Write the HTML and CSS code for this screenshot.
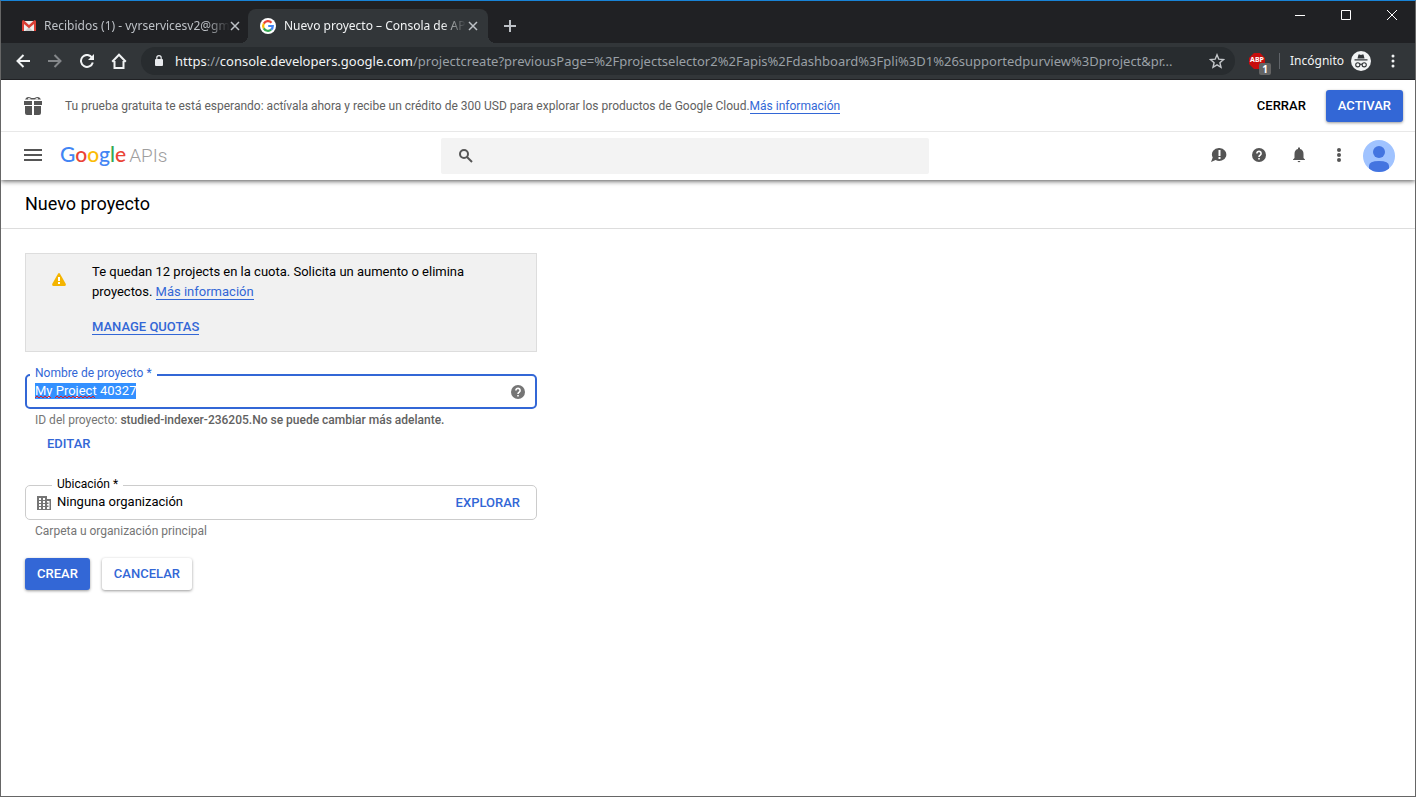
FILE: index.html
```html
<!DOCTYPE html>
<html lang="es">
	<head>
		<meta charset="utf-8">
		<title>Nuevo proyecto – Consola de APIs</title>
		<link rel="stylesheet" href="styles.css">
	</head>
	<body>
		<div class="window">
			<div class="tabstrip">
				<div class="tab">
					<svg width="14" height="12" viewBox="0 0 14 12"><path fill="#eee" d="M1 1h12v10H1z"/><path fill="#ccc" d="M3 11l4-4 4 4z"/><path fill="#d93f35" d="M0 1.500Q0 0 1.500 0L7 5l5.500-5Q14 0 14 1.500V11h-2V4L7 8.200 2 4v7H0z"/></svg>
					<span class="tab-title">Recibidos (1) - vyrservicesv2@gm</span>
					<button class="tab-close" aria-label="Cerrar"><svg width="10" height="10" viewBox="0 0 10 10"><path d="M1 1l8 8M9 1l-8 8"/></svg></button>
				</div>
				<div class="tab active">
					<svg width="16" height="16" viewBox="0 0 16 16"><circle cx="8" cy="8" r="8" fill="#fff"/><g fill="none" stroke-width="2.200"><path stroke="#ea4335" d="M3.800 5.600A4.800 4.800 0 0 1 11.500 4.700"/><path stroke="#fbbc05" d="M3.800 5.600A4.800 4.800 0 0 0 3.800 10.400"/><path stroke="#34a853" d="M3.800 10.400A4.800 4.800 0 0 0 11.100 11.700"/><path stroke="#4285f4" d="M11.100 11.700A4.800 4.800 0 0 0 12.800 8H8.200"/></g></svg>
					<span class="tab-title">Nuevo proyecto – Consola de AP</span>
					<button class="tab-close" aria-label="Cerrar"><svg width="10" height="10" viewBox="0 0 10 10"><path d="M1 1l8 8M9 1l-8 8"/></svg></button>
				</div>
				<button class="new-tab" aria-label="Nueva pestaña"><svg width="12" height="12" viewBox="0 0 12 12"><path d="M6 0v12M0 6h12"/></svg></button>
				<div class="window-controls">
					<button aria-label="Minimizar"><svg width="10" height="10" viewBox="0 0 10 10"><path d="M0 5.500h10"/></svg></button>
					<button aria-label="Maximizar"><svg width="10" height="10" viewBox="0 0 10 10"><path d="M.5.5h9v9h-9z"/></svg></button>
					<button aria-label="Cerrar ventana"><svg width="10" height="10" viewBox="0 0 10 10"><path d="M0 0l10 10M10 0L0 10"/></svg></button>
				</div>
			</div>

			<div class="toolbar">
				<button class="nav" aria-label="Atrás"><svg width="14" height="14" viewBox="0 0 14 14"><path d="M14 7H1.500M7.500 1l-6 6 6 6"/></svg></button>
				<button class="nav disabled" aria-label="Adelante"><svg width="14" height="14" viewBox="0 0 14 14"><path d="M0 7h12.500M6.500 1l6 6-6 6"/></svg></button>
				<button class="nav" aria-label="Recargar"><svg width="14" height="14" viewBox="0 0 14 14"><path d="M12 3.600A6 6 0 1 0 12.800 8.500"/><path class="solid" d="M14 0v6H8z"/></svg></button>
				<button class="nav" aria-label="Inicio"><svg width="16" height="16" viewBox="0 0 16 16"><path d="M1.200 8.800L8 1.800l6.800 7M3.500 8v7h9V8"/></svg></button>
				<div class="omnibox">
					<svg width="8" height="12" viewBox="0 0 8 12"><path fill="#e8eaed" d="M0 5q0-1 1-1h6q1 0 1 1v5q0 1-1 1H1q-1 0-1-1z"/><path fill="none" stroke="#e8eaed" stroke-width="1.200" d="M1.800 5V2.800a2.200 2.200 0 0 1 4.400 0V5"/></svg>
					<span class="url">https<i>://</i>console.developers.google.com<i>/projectcreate?previousPage=%2Fprojectselector2%2Fapis%2Fdashboard%3Fpli%3D1%26supportedpurview%3Dproject&amp;pr...</i></span>
					<svg width="16" height="16" viewBox="0 0 16 16"><path fill="none" stroke="#c4c7ca" stroke-width="1.400" d="M8 1.800l1.800 4.400 4.700.4L10.900 9.700l1.100 4.600L8 11.800l-4 2.500 1.100-4.600L1.500 6.600l4.700-.4z"/></svg>
				</div>
				<div class="extension">
					<svg width="16" height="16" viewBox="0 0 16 16"><path fill="#c70d0d" d="M5 0h6l5 5v6l-5 5H5l-5-5V5z"/></svg>
					<b class="ext-name">ABP</b>
					<b class="ext-count">1</b>
				</div>
				<span class="divider"></span>
				<span class="incognito">Incógnito</span>
				<svg width="20" height="20" viewBox="0 0 20 20"><circle cx="10" cy="10" r="10" fill="#f1f3f4"/><path fill="#323639" d="M6.500 7.500l1-4h1.200l1.300.5 1.300-.5h1.200l1 4zM3.500 8.200h13v1.200h-13z"/><g fill="none" stroke="#323639" stroke-width="1.100"><circle cx="6.800" cy="13.800" r="2.100"/><circle cx="13.200" cy="13.800" r="2.100"/><path d="M8.900 13.500q1.100-.7 2.200 0"/></g></svg>
				<button class="menu" aria-label="Menú"><svg width="4" height="14" viewBox="0 0 4 14"><circle cx="2" cy="2" r="1.500"/><circle cx="2" cy="7" r="1.500"/><circle cx="2" cy="12" r="1.500"/></svg></button>
			</div>

			<div class="trial">
				<svg width="18" height="18" viewBox="0 0 18 18"><path fill="#555" d="M0 4h8v4H0zM10 4h8v4h-8zM1 9h7v9H3q-2 0-2-2zM10 9h7v7q0 2-2 2h-5zM1 2.500Q2 0 4 0q2 0 3.500 1H10.500Q12 0 14 0q2 0 3 2.500H1z"/><path fill="#fff" d="M4 1.200h2l1 1.300H4zM14 1.200h-2l-1 1.300h3z"/></svg>
				<p>Tu prueba gratuita te está esperando: actívala ahora y recibe un crédito de 300 USD para explorar los productos de Google Cloud.<a href="#">Más información</a></p>
				<button class="button plain">Cerrar</button>
				<button class="button primary">Activar</button>
			</div>

			<header class="header">
				<div class="brand">
					<button class="icon-button" aria-label="Menú de navegación"><svg width="18" height="12" viewBox="0 0 18 12"><path fill="#555" d="M0 0h18v2H0zM0 5h18v2H0zM0 10h18v2H0z"/></svg></button>
					<a class="logo" href="#"><span class="google"><span class="g-blue">G</span><span class="g-red">o</span><span class="g-yellow">o</span><span class="g-blue">g</span><span class="g-green">l</span><span class="g-red">e</span></span><span class="apis">APIs</span></a>
				</div>
				<div class="search">
					<svg width="14" height="14" viewBox="0 0 14 14"><g fill="none" stroke="#555" stroke-width="2"><circle cx="5" cy="5" r="4"/><path d="M8 8l5 5"/></g></svg>
					<input type="search" aria-label="Buscar">
				</div>
				<div class="actions">
					<button class="icon-button" aria-label="Comentarios"><svg width="16" height="16" viewBox="0 0 16 16"><path fill="#555" d="M8.500 1A7 6.500 0 1 1 4.600 13L0 15l1.700-4.600A7 6.500 0 0 1 8.500 1z"/><path fill="#fff" d="M7.500 3h2v6h-2zM7.500 10h2v2h-2z"/></svg></button>
					<button class="icon-button" aria-label="Ayuda"><svg class="help" width="14" height="14" viewBox="0 0 14 14"><circle cx="7" cy="7" r="7"/><path d="M4.900 5.500a2.100 2.100 0 1 1 3.500 1.500Q7 7.800 7 9"/><path d="M7 10v1.600"/></svg></button>
					<button class="icon-button" aria-label="Notificaciones"><svg width="12" height="16" viewBox="0 0 12 16"><path fill="#555" d="M5 2V1q1-1.500 2 0v1q3.500.8 3.500 5v4L12 12.500v.5H0v-.5L1.500 11V7Q1.500 2.800 5 2zM4.500 14h3Q6 16.500 4.500 14z"/></svg></button>
					<button class="icon-button" aria-label="Más opciones"><svg width="4" height="14" viewBox="0 0 4 14" fill="#555"><circle cx="2" cy="2" r="2"/><circle cx="2" cy="7" r="2"/><circle cx="2" cy="12" r="2"/></svg></button>
					<button class="account" aria-label="Cuenta"><svg width="32" height="32" viewBox="0 0 32 32"><circle cx="16" cy="16" r="16" fill="#a0c3ff"/><circle cx="16" cy="12" r="6" fill="#4374e0"/><path fill="#4374e0" d="M6 28.500V26q0-5 10-5t10 5v2.500Q22 32 16 32T6 28.500z"/></svg></button>
				</div>
			</header>

			<h1>Nuevo proyecto</h1>

			<main>
				<form onsubmit="return false;">
					<div class="notice">
						<svg width="14" height="13" viewBox="0 0 14 13"><path fill="#f4b400" d="M6 .7Q7-.6 8 .7l5.700 10Q14.300 13 12.500 13h-11Q-.3 13 .3 10.700z"/><path fill="#fff" d="M6 4h2v4H6zM6 9h2v2H6z"/></svg>
						<div>
							<p>Te quedan 12 projects en la cuota. Solicita un aumento o elimina proyectos. <a href="#">Más información</a></p>
							<p class="quotas"><a href="#">Manage quotas</a></p>
						</div>
					</div>

					<div class="field focused">
						<label for="projectName">Nombre de proyecto *</label>
						<input id="projectName" type="text" value="My Project 40327" spellcheck="false">
						<svg class="spelling" width="62" height="3" viewBox="0 0 62 3"><path d="M0 2l2-2 2 2 2-2 2 2 2-2 2 2 2-2 2 2M20 2l2-2 2 2 2-2 2 2 2-2 2 2 2-2 2 2 2-2 2 2 2-2 2 2 2-2 2 2 2-2 2 2 2-2 2 2 2-2 2 2"/></svg>
						<svg class="help" width="14" height="14" viewBox="0 0 14 14"><circle cx="7" cy="7" r="7"/><path d="M4.900 5.500a2.100 2.100 0 1 1 3.500 1.500Q7 7.800 7 9"/><path d="M7 10v1.600"/></svg>
					</div>
					<p class="hint">ID del proyecto: <b>studied-indexer-236205.No se puede cambiar más adelante.</b></p>
					<button class="button link edit" type="button">Editar</button>

					<div class="field location">
						<label for="location">Ubicación *</label>
						<svg width="14" height="14" viewBox="0 0 14 14"><path fill="#757575" fill-rule="evenodd" d="M0 0h10v3h4v11H0zM2 2v2h2V2zM6 2v2h2V2zM2 5v2h2V5zM6 5v2h2V5zM2 8v2h2V8zM6 8v2h2V8zM2 11v2h2v-2zM6 11v2h2v-2zM10 5v8h2.500V5z"/><path fill="#757575" d="M10 6.500h1.500V8H10zM10 9.500h1.500V11H10z"/></svg>
						<input id="location" type="text" value="Ninguna organización" readonly>
						<button class="button link" type="button">Explorar</button>
					</div>
					<p class="hint">Carpeta u organización principal</p>

					<div class="buttons">
						<button class="button primary" type="submit">Crear</button>
						<button class="button raised" type="button">Cancelar</button>
					</div>
				</form>
			</main>
		</div>
		<script>
			var projectName = document.getElementById("projectName");
			projectName.focus();
			projectName.select();
		</script>
	</body>
</html>
```
FILE: styles.css
```css
* {
	box-sizing: border-box;
}
body {
	margin: 0;
	font-family: Roboto, sans-serif;
	font-size: 13px;
	line-height: 20px;
	color: #000;
	background: #fff;
}
button {
	margin: 0;
	padding: 0;
	border: 0;
	background: none;
	font: inherit;
	display: flex;
	align-items: center;
	justify-content: center;
}
input {
	border: 0;
	padding: 0;
	outline: 0;
	background: none;
	font: inherit;
	color: inherit;
	min-width: 0;
	flex: 1;
}
p {
	margin: 0;
}
svg {
	flex: none;
	display: block;
}
a {
	color: #3367d6;
	text-decoration: none;
	border-bottom: 1px solid #3367d6;
}
.window {
	min-height: 100vh;
	border: 1px solid #666;
	border-top-color: #1883d7;
}

/* browser frame */
.tabstrip {
	display: flex;
	align-items: flex-end;
	height: 42px;
	padding-left: 7px;
	background: #202124;
}
.tab {
	position: relative;
	display: flex;
	align-items: center;
	width: 240px;
	height: 34px;
	padding: 0 8px 0 14px;
	font-family: "Noto Sans", sans-serif;
	font-size: 12px;
	color: #bdc1c6;
}
.tab.active {
	padding-left: 12px;
	background: #323639;
	border-radius: 8px 8px 0 0;
	color: #f1f3f4;
}
.tab.active::before,
.tab.active::after {
	content: "";
	position: absolute;
	bottom: 0;
	width: 8px;
	height: 8px;
}
.tab.active::before {
	right: 100%;
	background: radial-gradient(circle at 0 0, #202124 8px, #323639 8px);
}
.tab.active::after {
	left: 100%;
	background: radial-gradient(circle at 100% 0, #202124 8px, #323639 8px);
}
.tab-title {
	flex: 1;
	margin-left: 8px;
	white-space: nowrap;
	mask-image: linear-gradient(to left, transparent, #000 24px);
}
.tab-close {
	width: 16px;
	height: 16px;
}
.tab-close svg,
.new-tab svg {
	fill: none;
	stroke: #bdc1c6;
	stroke-width: 2;
}
.tab-close svg {
	stroke-width: 1.5;
}
.new-tab {
	width: 28px;
	height: 34px;
	margin-left: 8px;
}
.window-controls {
	display: flex;
	align-self: flex-start;
	margin-left: auto;
}
.window-controls button {
	width: 46px;
	height: 28px;
}
.window-controls svg {
	fill: none;
	stroke: #fff;
}
.toolbar {
	display: flex;
	align-items: center;
	height: 37px;
	padding: 0 6px;
	background: #323639;
	border-bottom: 1px solid #202124;
	font-family: "Noto Sans", sans-serif;
	font-size: 12px;
	color: #f1f3f4;
}
.nav {
	width: 32px;
	height: 28px;
}
.nav svg {
	fill: none;
	stroke: #f1f3f4;
	stroke-width: 2;
}
.nav .solid {
	fill: #f1f3f4;
	stroke: none;
}
.nav.disabled svg {
	stroke: #84878a;
}
.omnibox {
	display: flex;
	flex: 1;
	align-items: center;
	gap: 12px;
	min-width: 0;
	height: 28px;
	margin: 0 14px 0 6px;
	padding: 0 10px 0 14px;
	background: #282c2f;
	border-radius: 14px;
	font-size: 13px;
}
.url {
	flex: 1;
	overflow: hidden;
	white-space: nowrap;
	text-overflow: ellipsis;
	color: #f1f3f4;
}
.url i {
	font-style: normal;
	color: #9aa0a6;
}
.extension {
	position: relative;
	margin-right: 14px;
}
.ext-name {
	position: absolute;
	top: 0;
	left: 0;
	width: 16px;
	font-size: 7px;
	line-height: 14px;
	text-align: center;
	color: #fff;
}
.ext-count {
	position: absolute;
	top: 10px;
	left: 10px;
	width: 12px;
	height: 12px;
	background: #646464;
	border-radius: 2px;
	font-size: 10px;
	line-height: 12px;
	text-align: center;
	color: #fff;
}
.divider {
	width: 1px;
	height: 16px;
	margin-right: 10px;
	background: #5f6368;
}
.incognito {
	margin-right: 7px;
}
.menu {
	width: 32px;
	height: 28px;
	margin-left: 6px;
}
.menu svg {
	fill: #f1f3f4;
}

/* buttons */
.button {
	height: 32px;
	padding: 0 12px;
	border-radius: 3px;
	font-weight: 500;
	text-transform: uppercase;
	color: #3367d6;
}
.button.plain {
	color: #000;
}
.button.primary {
	background: #3367d6;
	color: #fff;
}
.button.primary,
.button.raised {
	box-shadow: 0 1px 3px rgba(0, 0, 0, 0.4);
}

/* console header */
.trial {
	display: flex;
	align-items: center;
	height: 51px;
	padding: 0 12px 0 23px;
	font-size: 12px;
	color: #616161;
}
.trial p {
	flex: 1;
	margin-left: 23px;
}
.trial .button {
	font-size: 13px;
	margin-left: 8px;
}
.header {
	display: flex;
	align-items: center;
	height: 49px;
	padding-right: 20px;
	border-top: 1px solid #e8e8e8;
	box-shadow: 0 1px 5px rgba(0, 0, 0, 0.7);
	clip-path: inset(0 0 -8px 0);
}
.brand {
	display: flex;
	flex: 0 0 440px;
	align-items: center;
	padding-left: 12px;
}
.icon-button {
	width: 40px;
	height: 40px;
	padding-bottom: 2px;
}
.account {
	margin-left: 4px;
}
.logo {
	display: flex;
	align-items: baseline;
	gap: 3px;
	margin-left: 7px;
	padding-bottom: 3px;
	border: 0;
	font-size: 21px;
	line-height: 24px;
}
.google {
	font-family: Lato, sans-serif;
	font-weight: 500;
}
.apis {
	color: #9e9e9e;
	font-size: 19px;
	font-weight: 300;
}
.g-blue {
	color: #4285f4;
}
.g-red {
	color: #ea4335;
}
.g-yellow {
	color: #fbbc05;
}
.g-green {
	color: #34a853;
}
.search {
	display: flex;
	flex: 0 1 488px;
	align-items: center;
	gap: 16px;
	height: 36px;
	padding: 0 18px;
	background: #f3f3f3;
	border-radius: 2px;
}
.actions {
	display: flex;
	align-items: center;
	margin-left: auto;
}
.help {
	fill: none;
	stroke: #fff;
	stroke-width: 1.6;
}
.help circle {
	fill: #555;
	stroke: none;
}
h1 {
	margin: 0;
	padding: 12px 24px;
	border-bottom: 1px solid #ddd;
	font-size: 18px;
	font-weight: 400;
	line-height: 24px;
}

/* form */
main {
	padding: 24px;
}
form {
	max-width: 512px;
}
.notice {
	display: flex;
	gap: 26px;
	margin-bottom: 22px;
	padding: 8px 48px 14px 26px;
	background: #f1f1f1;
	border: 1px solid #ddd;
}
.notice svg {
	margin-top: 11px;
}
.quotas {
	margin-top: 15px;
	font-weight: 500;
	text-transform: uppercase;
}
.field {
	position: relative;
	display: flex;
	align-items: center;
	height: 35px;
	padding: 0 12px;
	border: 1px solid #ccc;
	border-radius: 5px;
}
.field label {
	position: absolute;
	top: -10px;
	left: 26px;
	padding: 0 5px;
	background: #fff;
	font-size: 12px;
	line-height: 16px;
}
.field input {
	height: 16px;
	margin-bottom: 2px;
	line-height: 16px;
}
.field.focused {
	padding: 0 10px 0 8px;
	border: 2px solid #3367d6;
}
.field.focused label {
	top: -11px;
	left: 3px;
	color: #3367d6;
}
.field.focused input::selection {
	background: #3390ff;
	color: #fff;
}
.field.focused .help circle {
	fill: #757575;
}
.spelling {
	position: absolute;
	left: 8px;
	bottom: 8px;
	fill: none;
	stroke: #e01b24;
}
.field.location {
	padding-left: 11px;
	padding-right: 4px;
	gap: 6px;
}
.hint {
	padding: 3px 10px 0;
	font-size: 12px;
	line-height: 16px;
	color: #757575;
}
.hint b {
	font-weight: 500;
	color: #616161;
}
.edit {
	margin: 0 10px 25px;
}
.buttons {
	display: flex;
	gap: 12px;
	margin-top: 19px;
}
```
